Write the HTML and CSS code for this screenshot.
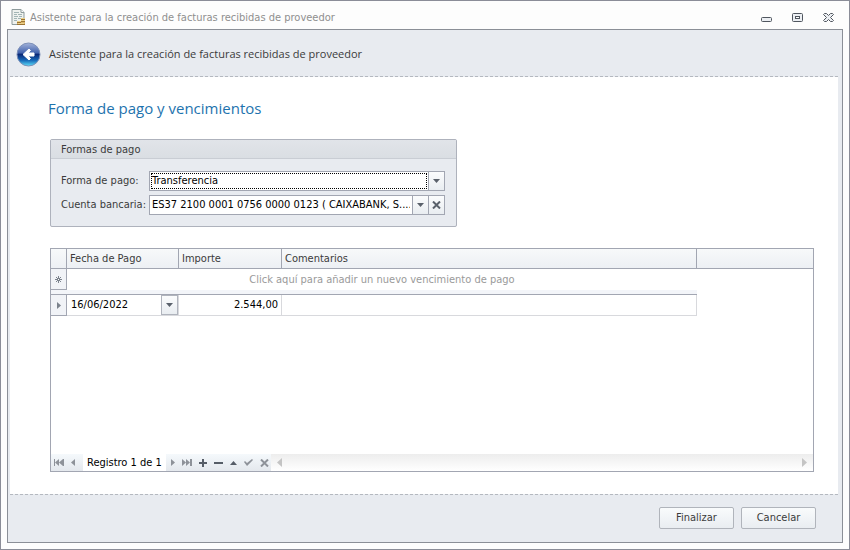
FILE: index.html
```html
<!DOCTYPE html>
<html lang="es">
<head>
    <meta charset="UTF-8">
    <meta name="viewport" content="width=device-width, initial-scale=1.0">
    <title>Asistente para la creación de facturas recibidas de proveedor</title>
    <link rel="stylesheet" href="styles.css">
</head>
<body>
    <div class="window">
        <header class="titlebar">
            <svg class="app-icon" width="15" height="17" viewBox="0 0 15 17">
                <path d="M1 .5h9l3 3v12H1z" fill="#eef1ee" stroke="#8d9a9b"/>
                <path d="M10 .5v3h3" fill="#fff" stroke="#8d9a9b"/>
                <path d="M3 3.5h5M3 5.5h3M7 5.5h4M3 7.5h4M8 7.5h3M3 9.5h3M7 9.5h3M3 11.5h3" stroke="#a3b5b5"/>
                <path d="M10 9h4v7H6v-4h4z" fill="#d9b46a"/>
                <path d="M10 10.5h4M10 12.5h4M6 13.5h4M6 15.5h8" stroke="#9c7434"/>
                <path d="M10 9.5h4M10 11.5h4M6 12.5h4M7 14.5h6" stroke="#ecd089"/>
            </svg>
            <span class="title">Asistente para la creación de facturas recibidas de proveedor</span>
            <div class="window-buttons">
                <button type="button" aria-label="Minimizar">
                    <svg width="11" height="9" viewBox="0 0 11 9"><rect x=".5" y="4.5" width="10" height="4" rx="1" fill="#eceff3" stroke="#50565f"/></svg>
                </button>
                <button type="button" aria-label="Maximizar">
                    <svg width="11" height="9" viewBox="0 0 11 9"><rect x=".5" y=".5" width="10" height="8" rx="1" fill="#eceff3" stroke="#50565f"/><rect x="3.5" y="3.5" width="4" height="2" fill="#fff" stroke="#50565f"/></svg>
                </button>
                <button type="button" aria-label="Cerrar">
                    <svg width="11" height="9" viewBox="0 0 11 9"><path d="M1.5.5h2l2 2 2-2h2l1 1-3 3 3 3-1 1h-2l-2-2-2 2h-2l-1-1 3-3-3-3z" fill="#eceff3" stroke="#50565f"/></svg>
                </button>
            </div>
        </header>

        <form class="wizard">
            <div class="wizard-header">
                <button type="button" class="back" aria-label="Atrás">
                    <svg width="25" height="25" viewBox="0 0 25 25">
                        <defs>
                            <linearGradient id="ball" x1="0" y1="0" x2="0" y2="1">
                                <stop offset="0" stop-color="#a3b3da"/>
                                <stop offset=".42" stop-color="#4464ae"/>
                                <stop offset=".5" stop-color="#0b2a78"/>
                                <stop offset=".75" stop-color="#1668b8"/>
                                <stop offset="1" stop-color="#5fe0fa"/>
                            </linearGradient>
                        </defs>
                        <circle cx="12.5" cy="12.5" r="11.5" fill="url(#ball)" stroke="#7d90b8"/>
                        <path d="M7 12.5l6-5.5 1.500 1.500-2.500 2.500h6v3h-6l2.500 2.500L13 18z" fill="#fff" stroke="#fff" stroke-linejoin="round"/>
                    </svg>
                </button>
                <span>Asistente para la creación de facturas recibidas de proveedor</span>
            </div>

            <main class="page">
                <h1>Forma de pago y vencimientos</h1>

                <fieldset class="group">
                    <legend>Formas de pago</legend>
                    <div class="fields">
                        <label for="forma">Forma de pago:</label>
                        <div class="combo">
                            <select id="forma" class="focused">
                                <option>Transferencia</option>
                            </select>
                            <span class="combo-button"><svg width="7" height="4" viewBox="0 0 7 4"><path d="M0 0h7L3.5 4z"/></svg></span>
                        </div>
                        <label for="cuenta">Cuenta bancaria:</label>
                        <div class="combo">
                            <select id="cuenta">
                                <option>ES37 2100 0001 0756 0000 0123 ( CAIXABANK, S....</option>
                            </select>
                            <span class="combo-button"><svg width="7" height="4" viewBox="0 0 7 4"><path d="M0 0h7L3.5 4z"/></svg></span>
                            <button type="button" class="combo-button" aria-label="Borrar">
                                <svg class="cross" width="9" height="8" viewBox="0 0 9 8"><path d="M1 .5l7 7M8 .5l-7 7"/></svg>
                            </button>
                        </div>
                    </div>
                </fieldset>

                <div class="grid">
                    <table>
                        <colgroup>
                            <col class="col-mark">
                            <col class="col-date">
                            <col class="col-amount">
                            <col class="col-notes">
                            <col>
                        </colgroup>
                        <thead>
                            <tr>
                                <th></th>
                                <th>Fecha de Pago</th>
                                <th>Importe</th>
                                <th>Comentarios</th>
                                <th></th>
                            </tr>
                        </thead>
                        <tbody>
                            <tr class="new-row">
                                <td class="mark"><svg width="7" height="7" viewBox="0 0 7 7"><path d="M3.5 0v7M0 3.5h7M1 1l5 5M6 1L1 6" stroke="#7b828c"/><path d="M3 3h1v1H3z" fill="#fff"/></svg></td>
                                <td colspan="3">Click aquí para añadir un nuevo vencimiento de pago</td>
                                <td></td>
                            </tr>
                            <tr class="band">
                                <td colspan="4"></td>
                                <td></td>
                            </tr>
                            <tr class="data-row">
                                <td class="mark"><svg width="4" height="7" viewBox="0 0 4 7"><path d="M0 0l4 3.5L0 7z"/></svg></td>
                                <td>
                                    <div class="date-editor">
                                        <input type="text" value="16/06/2022" aria-label="Fecha de Pago">
                                        <button type="button" aria-label="Abrir calendario"><svg width="7" height="4" viewBox="0 0 7 4"><path d="M0 0h7L3.5 4z"/></svg></button>
                                    </div>
                                </td>
                                <td class="amount">2.544,00</td>
                                <td></td>
                                <td></td>
                            </tr>
                        </tbody>
                    </table>

                    <div class="navigator">
                        <div class="nav-buttons nav-back">
                            <button type="button" aria-label="Primero"><svg width="10" height="7" viewBox="0 0 10 7"><path d="M0 0h1v7H0zM5 0v7L1 3.5zM9 0v7L5 3.5zM9 0h1v7H9z"/></svg></button>
                            <button type="button" aria-label="Anterior"><svg width="4" height="7" viewBox="0 0 4 7"><path d="M4 0v7L0 3.5z"/></svg></button>
                        </div>
                        <span class="record">Registro 1 de 1</span>
                        <div class="nav-buttons">
                            <button type="button" aria-label="Siguiente"><svg width="4" height="7" viewBox="0 0 4 7"><path d="M0 0v7l4-3.5z"/></svg></button>
                            <button type="button" aria-label="Último"><svg width="10" height="7" viewBox="0 0 10 7"><path d="M0 0l4 3.5L0 7zM4 0l4 3.5L4 7zM8 0h2v7H8z"/></svg></button>
                            <button type="button" class="dark" aria-label="Añadir"><svg width="8" height="8" viewBox="0 0 8 8"><path d="M3 0h2v3h3v2H5v3H3V5H0V3h3z"/></svg></button>
                            <button type="button" class="dark" aria-label="Eliminar"><svg width="9" height="2" viewBox="0 0 9 2"><path d="M0 0h9v2H0z"/></svg></button>
                            <button type="button" class="dark" aria-label="Editar"><svg width="7" height="4" viewBox="0 0 7 4"><path d="M0 4h7L3.5 0z"/></svg></button>
                            <button type="button" aria-label="Aceptar"><svg width="9" height="7" viewBox="0 0 9 7"><path d="M0 3l1-1 2 2 5-4 1 1-6 6z"/></svg></button>
                            <button type="button" aria-label="Cancelar edición"><svg class="cross" width="9" height="8" viewBox="0 0 9 8"><path d="M1 .5l7 7M8 .5l-7 7"/></svg></button>
                        </div>
                        <div class="scrollbar">
                            <svg width="5" height="9" viewBox="0 0 5 9"><path d="M5 0v9L0 4.5z"/></svg>
                            <svg width="5" height="9" viewBox="0 0 5 9"><path d="M0 0v9l5-4.5z"/></svg>
                        </div>
                    </div>
                </div>
            </main>

            <footer class="actions">
                <button type="button">Finalizar</button>
                <button type="button">Cancelar</button>
            </footer>
        </form>
    </div>
</body>
</html>
```
FILE: styles.css
```css
* {
    box-sizing: border-box;
}

body {
    margin: 0;
    font-family: Tahoma, "DejaVu Sans Condensed", "DejaVu Sans", sans-serif;
    font-size: 11px;
    line-height: 14px;
    color: #3b3b3b;
}

button,
input,
select {
    font: inherit;
    color: inherit;
    margin: 0;
    padding: 0;
    border: 0;
    background: none;
    border-radius: 0;
}

svg {
    display: block;
    flex: none;
}

.cross {
    stroke: #5a616b;
    stroke-width: 2px;
}

.window {
    display: flex;
    flex-direction: column;
    min-height: 100vh;
    padding: 0 6px 6px;
    border: 1px solid #8b8d98;
    background: #fdfdfd;
}

.titlebar {
    display: flex;
    align-items: center;
    height: 28px;
    padding: 5px 9px 0 4px;
    color: #8f8f8f;
}

.title {
    flex: 1;
    padding-left: 4px;
}

.window-buttons {
    display: flex;
    gap: 20px;
}

.wizard {
    flex: 1;
    display: flex;
    flex-direction: column;
    padding: 0 4px 0 2px;
    border: 1px solid #8b8f97;
    background: #e8ebf0;
}

.wizard-header {
    display: flex;
    align-items: center;
    gap: 8px;
    height: 47px;
    padding: 2px 0 0 6px;
    border-bottom: 1px dashed #b4b8bf;
    font-family: "Segoe UI", "Open Sans", sans-serif;
}

/* page */
.page {
    flex: 1;
    display: flex;
    flex-direction: column;
    padding: 20px 24px 22px 40px;
    background: #fff;
}

h1 {
    margin: 0 0 20px -2px;
    font-family: "Segoe UI", "Open Sans", sans-serif;
    font-size: 15px;
    font-weight: normal;
    line-height: 22px;
    color: #1e73ae;
}

.group {
    width: 407px;
    min-width: 0;
    margin: 0 0 21px;
    padding: 0;
    border: 1px solid #aeb2bc;
    border-radius: 2px;
    background: #e8ebf0;
}

.group legend {
    float: left;
    width: 100%;
    height: 19px;
    padding: 3px 10px 0;
    border-bottom: 1px solid #c9cdd4;
    background: linear-gradient(#e1e4e9, #dadee3);
}

.fields {
    clear: both;
    display: grid;
    grid-template-columns: 88px minmax(0, 1fr);
    align-items: center;
    gap: 4px 0;
    padding: 12px 11px 11px 10px;
}

.combo {
    display: flex;
    height: 20px;
    border: 1px solid #a2a6b2;
    background: #fff;
    color: #000;
}

.combo select {
    flex: 1;
    min-width: 0;
    padding: 0 2px;
    appearance: none;
}

.combo .focused {
    outline: 1px dotted #000;
    outline-offset: -2px;
}

.combo-button {
    display: flex;
    flex: none;
    align-items: center;
    justify-content: center;
    width: 16px;
    border-left: 1px solid #a2a6b2;
    background: linear-gradient(#fbfcfd, #e9edf1);
    fill: #5a616b;
}

/* grid */
.grid {
    flex: 1;
    display: flex;
    flex-direction: column;
    justify-content: space-between;
    border: 1px solid #a2a6b2;
}

table {
    width: 100%;
    table-layout: fixed;
    border-spacing: 0;
}

.col-mark {
    width: 16px;
}

.col-date {
    width: 112px;
}

.col-amount {
    width: 103px;
}

.col-notes {
    width: 415px;
}

th,
td {
    height: 20px;
    padding: 0 3px;
}

th {
    border-right: 1px solid #a2a6b2;
    border-bottom: 1px solid #a2a6b2;
    background: linear-gradient(#f7f9fa, #edf0f4);
    font-weight: normal;
    text-align: left;
}

th:last-child {
    border-right: 0;
}

.mark {
    padding: 0;
    border-right: 1px solid #a2a6b2;
    border-bottom: 1px solid #a2a6b2;
    background: #f1f3f7;
    fill: #7b828c;
}

.mark svg {
    margin: 0 auto;
}

.new-row td {
    height: 21px;
    text-align: center;
    color: #9a9a9a;
}

.band td {
    height: 5px;
}

.band td:first-child {
    border-bottom: 1px solid #a2a6b2;
    background: #f3f5f9;
}

.data-row td {
    height: 21px;
    color: #000;
}

.data-row td:not(.mark):not(:last-child) {
    border-right: 1px solid #d8d9dd;
    border-bottom: 1px solid #d8d9dd;
}

.data-row td:nth-child(2) {
    padding: 0;
}

.date-editor {
    display: flex;
    height: 20px;
}

.date-editor input {
    flex: 1;
    min-width: 0;
    padding: 0 4px;
}

.date-editor button {
    display: flex;
    align-items: center;
    justify-content: center;
    width: 17px;
    border: 1px solid #b0b4bd;
    background: linear-gradient(#fbfcfd, #e9edf1);
    fill: #5a616b;
}

.amount {
    text-align: right;
}

/* record navigator */
.navigator {
    display: flex;
    height: 17px;
    color: #000;
}

.nav-buttons {
    display: flex;
    align-items: center;
    gap: 7px;
    padding: 0 2px 0 5px;
    background: linear-gradient(#f5f9fc, #e4e8ed);
    fill: #8e9299;
}

.nav-back {
    padding: 0 8px 0 3px;
}

.nav-buttons .cross {
    stroke: #8e9299;
}

.nav-buttons .dark {
    fill: #565d67;
}

.record {
    padding: 2px 4px 0;
}

.scrollbar {
    flex: 1;
    display: flex;
    align-items: center;
    justify-content: space-between;
    padding: 0 6px;
    background: linear-gradient(#ededed, #fff);
    fill: #c4c4c4;
}

/* footer */
.actions {
    display: flex;
    justify-content: flex-end;
    gap: 7px;
    height: 48px;
    padding: 12px 22px 0 0;
    border-top: 1px dashed #b4b8bf;
}

.actions button {
    width: 75px;
    height: 22px;
    border: 1px solid #b0b4bb;
    border-radius: 2px;
    background: linear-gradient(#f9fbfc, #e9edf1);
}
```
